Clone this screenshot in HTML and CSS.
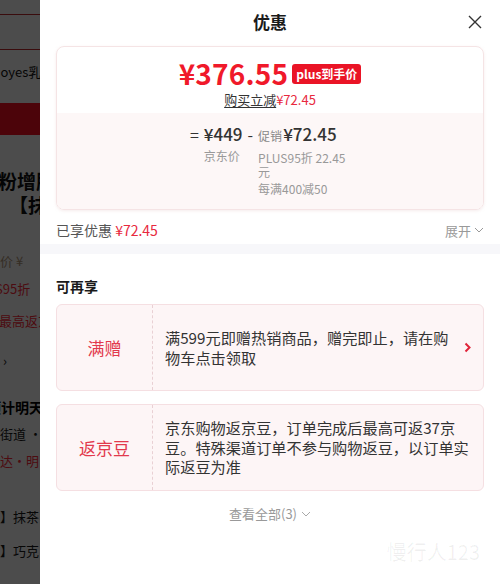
FILE: index.html
```html
<!DOCTYPE html>
<html lang="zh-CN">
<head>
  <meta charset="UTF-8" />
  <meta name="viewport" content="width=device-width, initial-scale=1" />
  <title>优惠</title>
  <link rel="stylesheet" href="styles.css">
</head>
<body>
  <!-- product page behind the drawer -->
  <div class="page">
    <div class="bg-bar short"></div>
    <div class="bg-bar"></div>
    <div class="bg-tabs"><span>Hoyes乳</span></div>
    <div class="bg-banner"></div>
    <div class="bg-title">
      <p class="t1">粉增肌</p>
      <p class="t2">【抹</p>
    </div>
    <p class="bg-line grey l1">到手价 ¥</p>
    <p class="bg-line red l2">PLUS95折</p>
    <p class="bg-line red l3">最高返京</p>
    <p class="bg-line dark l4">名 ›</p>
    <p class="bg-line bold l5">预计明天</p>
    <p class="bg-line dark l6">路街道 ·</p>
    <p class="bg-line red l7">时达·明</p>
    <p class="bg-line dark l8">详】抹茶</p>
    <p class="bg-line dark l9">详】巧克</p>
  </div>
  <div class="mask"></div>

  <div class="sheet">
    <div class="sheet-head">
      <h2>优惠</h2>
      <button class="close" aria-label="关闭">
        <svg width="14" height="14" viewBox="0 0 14 14"><path d="M1 1L13 13M13 1L1 13" stroke="#333" stroke-width="1.4" fill="none"/></svg>
      </button>
    </div>

    <div class="sheet-body">
      <div class="price-card">
        <div class="price-top">
          <div class="price-line">
            <span class="final">¥376.55</span>
            <span class="badge">plus到手价</span>
          </div>
          <div class="save"><u>购买立减</u><em>¥72.45</em></div>
        </div>
        <div class="price-calc">
          <span class="op">=</span>
          <div class="calc-col">
            <div class="amount">¥449</div>
            <div class="sub">京东价</div>
          </div>
          <span class="op">-</span>
          <div class="calc-col wide">
            <div class="amount"><small>促销</small>¥72.45</div>
            <div class="sub">PLUS95折 22.45 元</div>
            <div class="sub">每满400减50</div>
          </div>
        </div>
      </div>

      <div class="enjoyed">
        <span>已享优惠 <em>¥72.45</em></span>
        <span class="expand">展开
          <svg width="10" height="6" viewBox="0 0 10 6"><polyline points="1,1 5,5 9,1" stroke="#999" stroke-width="1" fill="none"/></svg>
        </span>
      </div>
    </div>

    <div class="band"></div>

    <div class="more">
      <h3>可再享</h3>
      <div class="promo">
        <div class="promo-tag">满赠</div>
        <div class="promo-text">满599元即赠热销商品，赠完即止，请在购物车点击领取</div>
        <svg class="promo-arrow" width="7" height="11" viewBox="0 0 7 11"><polyline points="1.5,1.5 5.5,5.5 1.5,9.5" stroke="#e0243a" stroke-width="2" fill="none"/></svg>
      </div>
      <div class="promo">
        <div class="promo-tag">返京豆</div>
        <div class="promo-text">京东购物返京豆，订单完成后最高可返37京豆。特殊渠道订单不参与购物返豆，以订单实际返豆为准</div>
      </div>
      <div class="view-all">查看全部(3)
        <svg width="10" height="6" viewBox="0 0 10 6"><polyline points="1,1 5,5 9,1" stroke="#aaa" stroke-width="1" fill="none"/></svg>
      </div>
    </div>

    <div class="watermark">慢行人123</div>
  </div>
</body>
</html>
```

FILE: styles.css
```css
* {
  box-sizing: border-box;
}
body {
  margin: 0;
  font-family: "Noto Sans CJK SC", "Noto Sans", sans-serif;
  color: #333;
  background: #fff;
  overflow: hidden;
  height: 584px;
}
p {
  margin: 0;
}

/* page behind */
.page {
  width: 500px;
  height: 584px;
  background: #fff;
  overflow: hidden;
}
.bg-bar {
  height: 35px;
  border-bottom: 1px solid #c4282e;
}
.bg-bar.short {
  height: 15px;
}
.bg-tabs {
  height: 53px;
  font-size: 13px;
  line-height: 44px;
  margin-left: -9px;
  color: #111;
}
.bg-banner {
  height: 32px;
  background: #ff1024;
}
.bg-title {
  padding-top: 34px;
  font-size: 19px;
  font-weight: 700;
  color: #111;
  line-height: 24px;
}
.bg-title .t1 {
  margin-left: -2px;
}
.bg-title .t2 {
  margin-left: 9px;
}
.bg-line {
  font-size: 13px;
  line-height: 18px;
  white-space: nowrap;
}
.bg-line.grey { color: #b39a7e; }
.bg-line.red { color: #ff2a3a; }
.bg-line.dark { color: #1a1a1a; }
.bg-line.bold { color: #000; font-weight: 700; font-size: 14px; }
.l1 { margin: 35px 0 0 -26px; }
.l2 { margin: 10px 0 0 -29px; }
.l3 { margin: 14px 0 0 -1px; }
.l4 { margin: 22px 0 0 -13px; }
.l5 { margin: 28px 0 0 -13px; }
.l6 { margin: 9px 0 0 -13px; }
.l7 { margin: 9px 0 0 -13px; }
.l8 { margin: 38px 0 0 -13px; }
.l9 { margin: 16px 0 0 -13px; }

.mask {
  position: fixed;
  inset: 0;
  background: rgba(0, 0, 0, 0.7);
}

/* drawer */
.sheet {
  position: fixed;
  top: 0;
  bottom: 0;
  left: 40px;
  right: 0;
  background: #fff;
}
.sheet-head {
  height: 42px;
  display: flex;
  align-items: center;
  justify-content: center;
  position: relative;
}
.sheet-head h2 {
  margin: 0;
  font-size: 17px;
  font-weight: 700;
  color: #1a1a1a;
}
.close {
  position: absolute;
  right: 17px;
  top: 14px;
  width: 16px;
  height: 16px;
  padding: 0;
  border: none;
  background: none;
  display: flex;
  align-items: center;
  justify-content: center;
}
.sheet-body {
  padding: 4px 16px 0;
}
.price-card {
  border: 1px solid #f5e4e5;
  border-radius: 8px;
  overflow: hidden;
  box-shadow: 0 1px 3px rgba(230, 200, 200, 0.35);
}
.price-top {
  padding: 10px 0 3px;
  text-align: center;
}
.price-line {
  display: flex;
  justify-content: center;
  align-items: center;
  gap: 4px;
  height: 32px;
  line-height: 32px;
}
.final {
  font-size: 28px;
  font-weight: 600;
  color: #f0192a;
  letter-spacing: 0.2px;
}
.badge {
  background: #ea1426;
  color: #fff;
  font-size: 12px;
  font-weight: 700;
  line-height: 20px;
  padding: 0 4px;
  border-radius: 3px;
  margin-top: 2px;
}
.save {
  font-size: 13px;
  line-height: 20px;
  margin-top: 1px;
  color: #333;
}
.save u {
  text-decoration-color: #333;
  text-underline-offset: 2px;
}
.save em, .enjoyed em {
  font-style: normal;
  color: #e8293e;
}
.price-calc {
  background: #fdf7f7;
  display: flex;
  justify-content: center;
  gap: 5px;
  padding: 9px 0 13px;
}
.op {
  font-size: 16px;
  line-height: 24px;
  color: #333;
}
.calc-col {
  display: flex;
  flex-direction: column;
}
.calc-col.wide {
  width: 92px;
}
.amount {
  font-size: 17px;
  font-weight: 500;
  line-height: 24px;
  color: #333;
  white-space: nowrap;
}
.amount small {
  font-size: 12px;
  color: #888;
  font-weight: 400;
  margin-right: 1px;
}
.sub {
  font-size: 12px;
  line-height: 14px;
  color: #999;
  margin-top: 3px;
}
.enjoyed {
  display: flex;
  justify-content: space-between;
  align-items: center;
  height: 22px;
  margin: 9px 0 3px;
  font-size: 14px;
  color: #555;
}
.expand {
  font-size: 13px;
  color: #999;
  display: flex;
  align-items: center;
  gap: 3px;
}
.band {
  height: 10px;
  background: #f7f7fa;
}
.more {
  padding: 22px 16px 0;
}
.more h3 {
  margin: 0 0 8px;
  font-size: 14px;
  font-weight: 700;
  line-height: 20px;
  color: #1a1a1a;
}
.promo {
  display: flex;
  align-items: center;
  min-height: 87px;
  margin-bottom: 13px;
  background: #fdf5f6;
  border: 1px solid #f5dfe2;
  border-radius: 6px;
}
.promo-tag {
  width: 96px;
  align-self: stretch;
  display: flex;
  align-items: center;
  justify-content: center;
  border-right: 1px dashed #e9d0d4;
  font-size: 17px;
  color: #e2394d;
}
.promo-text {
  flex: 1;
  padding: 12px 10px 12px 12px;
  font-size: 15.2px;
  line-height: 19.5px;
  color: #333;
}
.promo-arrow {
  margin: 0 12px 0 4px;
  flex-shrink: 0;
}
.view-all {
  display: flex;
  justify-content: center;
  align-items: center;
  gap: 4px;
  font-size: 13px;
  color: #999;
  margin-top: 7px;
}
.watermark {
  position: absolute;
  right: 20px;
  bottom: 18px;
  font-size: 20px;
  color: rgba(0, 0, 0, 0.06);
}
```
